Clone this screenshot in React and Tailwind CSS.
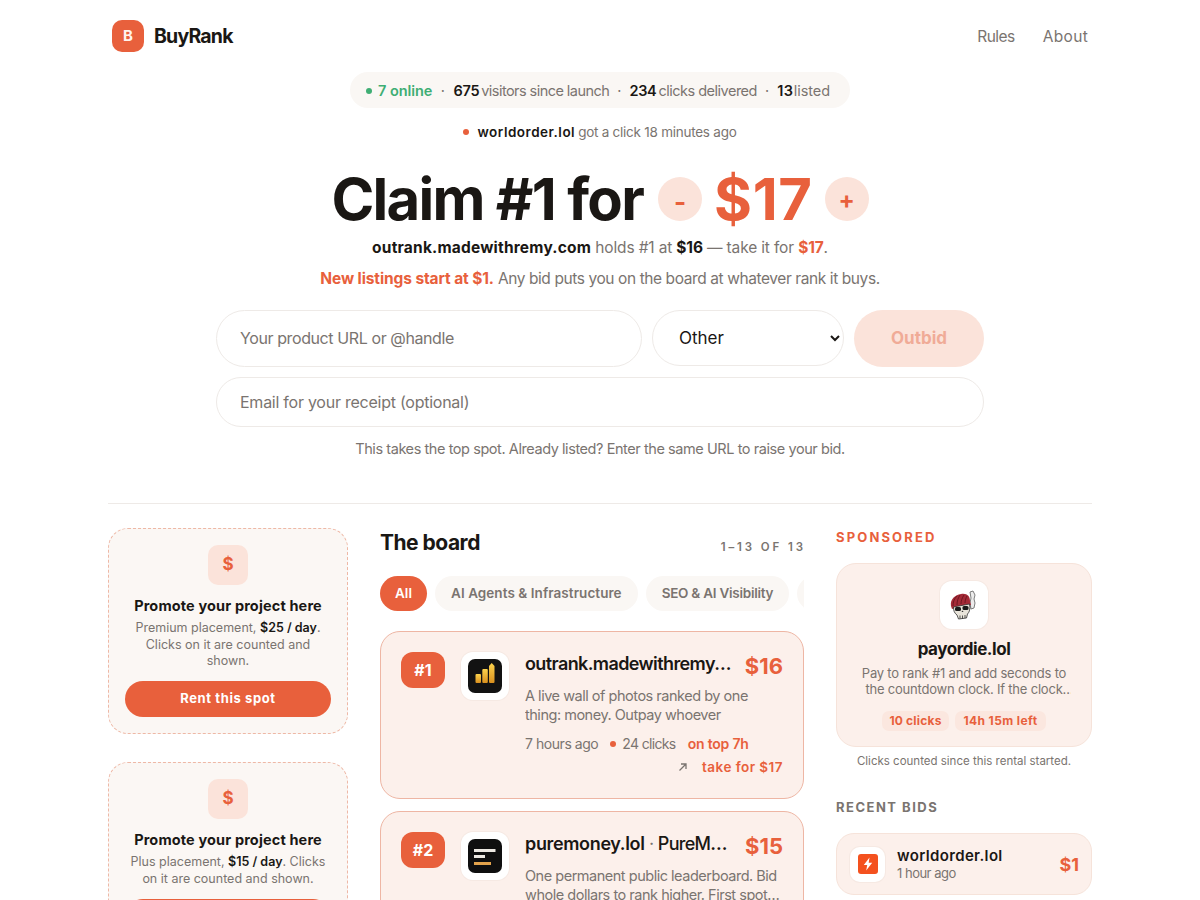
import React from "react";

function Outrank() {
  return (
    <svg width="34" height="34" viewBox="0 0 34 34">
      <defs>
        <linearGradient id="g1" x1="0" y1="0" x2="0" y2="1">
          <stop offset="0" stopColor="#fcd34d" />
          <stop offset="1" stopColor="#d9901f" />
        </linearGradient>
      </defs>
      <rect width="34" height="34" rx="7" fill="#121212" />
      <rect x="7.500" y="15" width="5.500" height="9" rx="1" fill="url(#g1)" />
      <rect x="14.300" y="10" width="5.500" height="14" rx="1" fill="url(#g1)" />
      <path d="M21 7l2.700-3 2.800 3v16a1 1 0 0 1-1 1h-3.500a1 1 0 0 1-1-1z" fill="url(#g1)" />
    </svg>
  );
}

function Puremoney() {
  return (
    <svg width="34" height="34" viewBox="0 0 34 34">
      <rect width="34" height="34" rx="7" fill="#0f0f0f" />
      <rect x="6" y="10" width="21.500" height="3" fill="#ece8e2" />
      <rect x="6" y="16" width="11" height="3" fill="#ece8e2" />
      <rect x="6" y="23" width="17" height="3" fill="#e3a34c" />
    </svg>
  );
}

function Skull() {
  return (
    <svg width="30" height="32" viewBox="0 0 30 32">
      <path d="M21 3l3-1 2 4-1 4 1 4-1 5-3 1-1-6 1-5z" fill="#ececec" stroke="#6f6f6f" strokeWidth="0.900" />
      <path d="M2 17C1 10 6 6 12 5c6-1 9 2 9 7l1 4-6 1-13 3z" fill="#a42a37" />
      <path d="M4 17c0-4 1-7 4-10M8 16c0-4 1-7 3-10M12 15c0-3 1-6 3-9M16 14c0-3 1-5 2-7" stroke="#6d1620" strokeWidth="1" fill="none" />
      <path d="M4.500 18l16-3c1 5 0 8-2 10l-1 4-8 1-1.500-4c-3-2-3.500-5-3.500-8z" fill="#e8e4da" stroke="#2e2e2e" strokeWidth="0.800" />
      <rect x="6" y="18" width="6" height="4" rx="1.500" fill="#191919" />
      <rect x="13.500" y="17" width="6" height="4" rx="1.500" fill="#191919" />
      <path d="M11 26.500v3M13.500 26.500v3M16 26v3" stroke="#2e2e2e" strokeWidth="0.800" />
      <path d="M12.500 23l1-1.500 1 1.500z" fill="#2e2e2e" />
    </svg>
  );
}

function Bolt() {
  return (
    <svg width="20" height="20" viewBox="0 0 20 20">
      <rect width="20" height="20" rx="3" fill="#f4511e" />
      <path d="M11.500 3.500L5.800 11h3.400l-1 5.500L14.200 8.700h-3.500z" fill="#fff" />
    </svg>
  );
}

function Promo({ tier, price, lines }) {
  return (
    <div className="flex flex-col items-center rounded-[20px] border border-dashed border-[#eeb8a6] bg-[#fbf7f4] p-4 text-center">
      <div className="flex h-10 w-10 items-center justify-center rounded-[10px] bg-[#fbe3da] text-[17px] font-bold text-[#e8603c]">$</div>
      <div className="mt-[11px] text-[14.500px] font-bold leading-[20px] tracking-[0.14px] text-[#1a1714]">Promote your project here</div>
      <p className="mt-[4px] text-[12.500px] leading-[16.500px] text-[#7a7470]">
        {tier} placement, <b className="font-semibold text-[#1a1714]">{price}</b>{lines}
      </p>
      <button className="mt-[11.500px] h-9 w-full shrink-0 rounded-full bg-[#e8603c] text-[13px] font-bold tracking-[0.6px] text-white">Rent this spot</button>
    </div>
  );
}

function Row({ rank, logo, name, nameClass, sub, price, desc, meta }) {
  return (
    <div className="flex gap-4 rounded-[20px] border border-[#eeb6a4] bg-[#fcf0eb] px-5 pb-[21px] pt-5">
      <div className="flex h-9 w-11 shrink-0 items-center justify-center rounded-xl bg-[#e8603c] text-[16px] font-bold text-white">{rank}</div>
      <div className="flex h-12 w-12 shrink-0 items-center justify-center rounded-xl bg-white shadow-[0_0_0_1px_#f6e9e3]">{logo}</div>
      <div className="min-w-0 flex-1">
        <div className="flex h-7 items-start gap-3">
          <div className={"min-w-0 flex-1 truncate text-[18px] font-semibold leading-[24px] text-[#1a1714] " + nameClass}>
            {name}
            {sub && <span className="font-medium tracking-[-0.7px]"><span className="font-normal text-[#7a7470]"> · </span>{sub}</span>}
          </div>
          <div className="text-[22px] font-bold leading-[28px] text-[#e8603c]">{price}</div>
        </div>
        <p className="mt-[6px] line-clamp-2 text-[14.500px] leading-[19px] tracking-[-0.48px] text-[#7a7470]">{desc}</p>
        {meta}
      </div>
    </div>
  );
}

export default function App() {
  return (
    <div className="h-[900px] overflow-hidden bg-white text-[#1a1714] [font-family:Inter,sans-serif]">
      <div className="mx-auto w-[984px]">
        <header className="flex h-[72px] items-center justify-between px-1">
          <div className="flex items-center gap-[10px]">
            <div className="flex h-8 w-8 items-center justify-center rounded-[10px] bg-[#e8603c] text-[15px] font-bold text-[#fff3ee]">B</div>
            <span className="pt-[1px] text-[19.500px] font-bold tracking-[-0.8px]">BuyRank</span>
          </div>
          <nav className="flex gap-7 pt-[2px] text-[15.500px] text-[#7a7470]">
            <span className="tracking-[-0.5px]">Rules</span>
            <span className="tracking-[0.3px]">About</span>
          </nav>
        </header>

        <section className="flex flex-col items-center">
          <div className="flex h-9 w-[500px] items-center rounded-full bg-[#faf7f4] pl-[16px] pt-[1px] text-[14.500px] text-[#7a7470]">
            <span className="mr-[6px] h-[6px] w-[6px] rounded-full bg-[#3fae74]" />
            <span className="font-semibold tracking-[-0.05px] text-[#3fae74]">7 online</span>
            <span className="mx-[8.500px]">·</span>
            <span className="font-semibold tracking-[-0.3px] text-[#1a1714]">675</span>
            <span className="ml-[2px] tracking-[-0.55px]">visitors since launch</span>
            <span className="mx-[8px]">·</span>
            <span className="font-semibold tracking-[-0.3px] text-[#1a1714]">234</span>
            <span className="ml-[2px] tracking-[-0.5px]">clicks delivered</span>
            <span className="mx-[8px]">·</span>
            <span className="font-semibold tracking-[0.6px] text-[#1a1714]">13</span>
            <span className="tracking-[-0.05px]">listed</span>
          </div>
          <div className="mt-[15px] flex h-[18px] items-center text-[13.500px] tracking-[-0.25px] text-[#7a7470]">
            <span className="mr-2 h-[6px] w-[6px] rounded-full bg-[#e8603c]" />
            <b className="mr-[3px] font-semibold tracking-[0.5px] text-[#1a1714]">worldorder.lol</b> got a click 18 minutes ago
          </div>
          <div className="mt-[23px] flex h-[70px] items-center">
            <h1 className="text-[58px] font-bold leading-[70px] tracking-[-1.700px] text-[#1a1714]">Claim #1 for</h1>
            <button className="ml-[15px] flex h-11 w-11 items-center justify-center rounded-full bg-[#fbe3da] pt-1 text-[26px] font-bold text-[#e8603c]">-</button>
            <span className="mx-3 text-[58px] font-bold leading-[70px] tracking-[0.6px] text-[#e8603c]">$17</span>
            <button className="flex h-11 w-11 items-center justify-center rounded-full bg-[#fbe3da] pt-[2px] text-[24px] font-bold text-[#e8603c]">+</button>
          </div>
          <p className="mt-[2px] text-[15.500px] leading-[24px] tracking-[-0.15px] text-[#7a7470]">
            <b className="font-bold tracking-[0.2px] text-[#1a1714]">outrank.madewithremy.com</b> holds #1 at <b className="font-bold text-[#1a1714]">$16</b> — take it for <b className="font-bold text-[#e8603c]">$17</b>.
          </p>
          <p className="mt-[7px] text-[15.500px] leading-[24px] tracking-[-0.41px] text-[#7a7470]">
            <b className="font-bold tracking-[-0.1px] text-[#e8603c]">New listings start at $1.</b> Any bid puts you on the board at whatever rank it buys.
          </p>
          <div className="mt-[19px] flex w-[768px] items-start gap-[10px]">
            <input readOnly placeholder="Your product URL or @handle" className="h-[57px] min-w-0 flex-1 rounded-full border border-[#eeeae7] bg-white px-[23px] pb-[1px] text-[16px] tracking-[-0.4px] outline-none placeholder:text-[#7a7470]" />
            <select className="h-14 w-[192px] rounded-full border border-[#eeeae7] bg-white pl-[22px] pr-2 text-[17px] text-[#1a1714] outline-none" defaultValue="Other">
              <option>Other</option>
            </select>
            <button className="h-[57px] w-[130px] rounded-full bg-[#fbe3da] text-[17px] font-bold text-[#f0ab97]">Outbid</button>
          </div>
          <input readOnly placeholder="Email for your receipt (optional)" className="mt-[10px] h-[50px] w-[768px] rounded-full border border-[#eeeae7] bg-white px-[23px] text-[16px] tracking-[-0.25px] outline-none placeholder:text-[#7a7470]" />
          <p className="mt-[11px] text-[14.500px] leading-[22px] tracking-[-0.43px] text-[#7a7470]">This takes the top spot. Already listed? Enter the same URL to raise your bid.</p>
        </section>

        <div className="mt-[43px] border-t border-[#eeeae7] pt-6">
          <div className="flex gap-8">
            <aside className="flex w-[240px] shrink-0 flex-col gap-7">
              <Promo tier="Premium" price="$25 / day" lines=". Clicks on it are counted and shown." />
              <Promo tier="Plus" price="$15 / day" lines=". Clicks on it are counted and shown." />
            </aside>

            <main className="w-[424px] shrink-0">
              <div className="flex h-[30px] items-center justify-between">
                <h2 className="text-[21px] font-bold tracking-[-0.5px]">The board</h2>
                <span className="mt-[10px] -mr-[2px] text-[11.500px] font-semibold tracking-[2.900px] text-[#7a7470]">1–13 OF 13</span>
              </div>
              <div className="mt-[18px] flex gap-2 overflow-hidden">
                <span className="flex h-[35px] w-[47px] shrink-0 items-center justify-center rounded-full bg-[#e8603c] text-[13.500px] font-semibold text-white">All</span>
                <span className="flex h-[35px] shrink-0 items-center rounded-full bg-[#faf7f4] px-4 text-[13.500px] font-semibold tracking-[0.06px] text-[#7a7470]">AI Agents &amp; Infrastructure</span>
                <span className="flex h-[35px] shrink-0 items-center rounded-full bg-[#faf7f4] px-4 text-[13.500px] font-semibold tracking-[-0.25px] text-[#7a7470]">SEO &amp; AI Visibility</span>
                <span className="flex h-[35px] shrink-0 items-center rounded-full bg-[#faf7f4] px-4 text-[13.500px] font-semibold text-[#7a7470]">Other</span>
              </div>
              <div className="mt-5 flex flex-col gap-3">
                <Row
                  rank="#1"
                  logo={<Outrank />}
                  name="outrank.madewithremy.com"
                  nameClass="tracking-[-0.6px]"
                  price="$16"
                  desc="A live wall of photos ranked by one thing: money. Outpay whoever"
                  meta={
                    <>
                      <div className="mt-[10px] flex items-center text-[14px] leading-[20px] text-[#7a7470]">
                        <span className="tracking-[-0.45px]">7 hours ago</span>
                        <span className="ml-3 mr-[6px] h-[6px] w-[6px] rounded-full bg-[#e8603c]" />
                        <span className="tracking-[-0.65px]">24 clicks</span>
                        <span className="ml-3 font-semibold tracking-[-0.2px] text-[#e8603c]">on top 7h</span>
                      </div>
                      <div className="mt-[3px] flex items-center justify-end gap-[14px] text-[13.500px] font-semibold leading-[20px] text-[#e8603c]">
                        <span className="text-[#7a7470]">
                          <svg width="10" height="10" viewBox="0 0 10 10" fill="none" stroke="currentColor" strokeWidth="1.300"><path d="M1.500 8.500L8 2M3 2h5v5" /></svg>
                        </span>
                        <span className="tracking-[0.45px]">take for $17</span>
                      </div>
                    </>
                  }
                />
                <Row
                  rank="#2"
                  logo={<Puremoney />}
                  name="puremoney.lol"
                  nameClass="tracking-[-0.35px]"
                  sub="PureMoney: a public leaderboard"
                  price="$15"
                  desc="One permanent public leaderboard. Bid whole dollars to rank higher. First spot goes to whoever pays the most and keeps it."
                />
              </div>
            </main>

            <aside className="w-[256px] shrink-0">
              <div className="text-[13px] font-bold leading-[18px] tracking-[2.150px] text-[#e8603c]">SPONSORED</div>
              <div className="mt-[17px] flex flex-col items-center rounded-[20px] border border-[#f6e3da] bg-[#fcf0eb] px-5 pb-[15px] pt-[17px]">
                <div className="flex h-12 w-12 items-center justify-center rounded-xl bg-white shadow-[0_0_0_1px_#f6e9e3]"><Skull /></div>
                <div className="mt-[8px] text-[17px] font-bold leading-[24px] tracking-[-0.45px]">payordie.lol</div>
                <p className="mt-[4px] line-clamp-2 text-center text-[13px] leading-[16px] tracking-[-0.2px] text-[#7a7470]">Pay to rank #1 and add seconds to the countdown clock. If the clock runs out the last bidder wins.</p>
                <div className="mt-[14px] flex gap-[6px] text-[12px] font-bold text-[#e8603c]">
                  <span className="flex h-5 w-[67px] items-center justify-center rounded-[7px] bg-[#fbe7df] tracking-[0.2px]">10 clicks</span>
                  <span className="flex h-5 w-[91px] items-center justify-center rounded-[7px] bg-[#fbe7df] tracking-[0.4px]">14h 15m left</span>
                </div>
              </div>
              <p className="mt-[6px] text-center text-[11.500px] leading-[16px] text-[#7a7470]">Clicks counted since this rental started.</p>
              <div className="mt-[29px] text-[13px] font-bold leading-[18px] tracking-[1.500px] text-[#7a7470]">RECENT BIDS</div>
              <div className="mt-[17px] flex h-[62px] items-center rounded-[18px] border border-[#f6e3da] bg-[#fcf0eb] pl-[13px] pr-3">
                <div className="flex h-[35px] w-[35px] shrink-0 items-center justify-center rounded-[10px] bg-white shadow-[0_0_0_1px_#f6e9e3]"><Bolt /></div>
                <div className="ml-3 flex-1 leading-none">
                  <div className="text-[15px] font-semibold leading-[18px] tracking-[0.35px] text-[#1a1714]">worldorder.lol</div>
                  <div className="text-[13px] leading-[16px] tracking-[-0.5px] text-[#7a7470]">1 hour ago</div>
                </div>
                <div className="text-[18px] font-bold text-[#e8603c]">$1</div>
              </div>
            </aside>
          </div>
        </div>
      </div>
    </div>
  );
}
